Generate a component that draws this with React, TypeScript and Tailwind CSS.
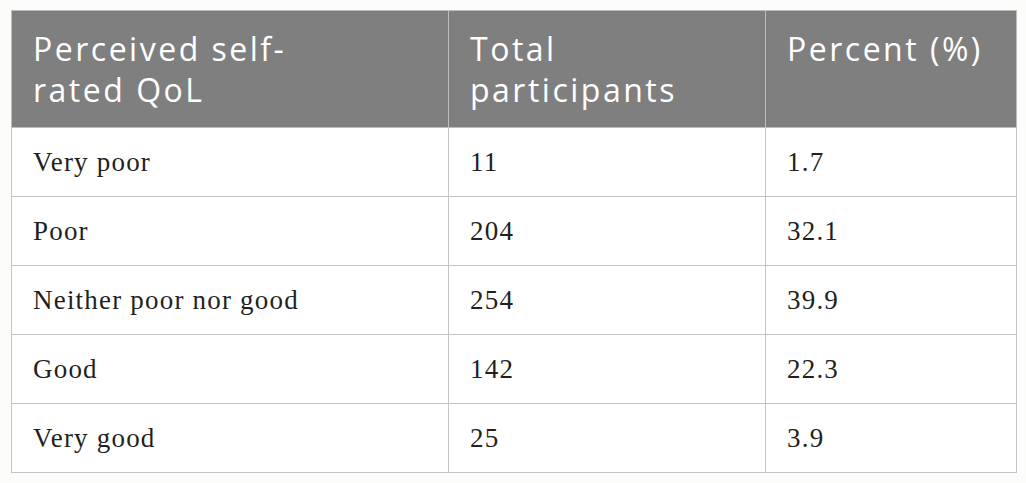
import React from "react";

const rows = [
  ["Very poor", "11", "1.7"],
  ["Poor", "204", "32.1"],
  ["Neither poor nor good", "254", "39.9"],
  ["Good", "142", "22.3"],
  ["Very good", "25", "3.9"],
];

export default function App() {
  return (
    <div className="w-[1026px] h-[483px] bg-[#fcfcfa] pt-[10px] pl-[11px]">
      <table className="table-fixed border-collapse w-[1005px] bg-white">
        <colgroup>
          <col className="w-[437px]" />
          <col className="w-[317px]" />
          <col className="w-[251px]" />
        </colgroup>
        <thead>
          <tr className="h-[117px] bg-[#7f7f7f]">
            {["Perceived self-\nrated QoL", "Total\nparticipants", "Percent (%)"].map((h, i) => (
              <th
                key={i}
                className="border border-[#bdbdbd] align-top text-left font-normal text-white pt-[17px] pl-[21px] pr-[10px] text-[32px] leading-[41px] tracking-[2.5px] whitespace-pre-line [font-family:'Open_Sans',sans-serif]"
              >
                {h}
              </th>
            ))}
          </tr>
        </thead>
        <tbody>
          {rows.map((r, i) => (
            <tr key={i} className="h-[69px]">
              {r.map((c, j) => (
                <td
                  key={j}
                  className="border border-[#c4c4c4] align-middle pl-[21px] text-[27px] leading-[29px] tracking-[1.2px] text-[#231f20] [font-family:'Liberation_Serif',serif]"
                >
                  {c}
                </td>
              ))}
            </tr>
          ))}
        </tbody>
      </table>
    </div>
  );
}
